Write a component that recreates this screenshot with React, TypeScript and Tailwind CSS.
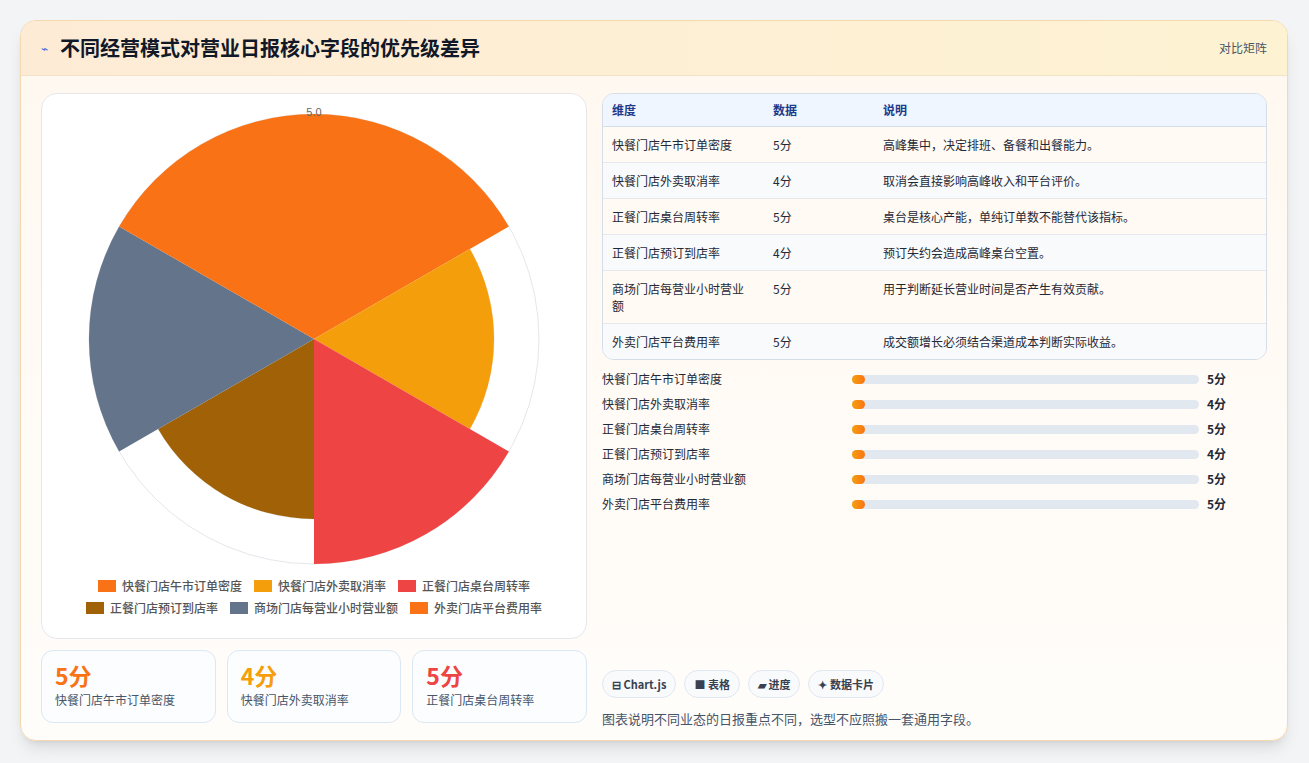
import React from 'react';

const rows = [
  { name: '快餐门店午市订单密度', score: 5, note: '高峰集中，决定排班、备餐和出餐能力。', color: '#f97316' },
  { name: '快餐门店外卖取消率', score: 4, note: '取消会直接影响高峰收入和平台评价。', color: '#f59e0b' },
  { name: '正餐门店桌台周转率', score: 5, note: '桌台是核心产能，单纯订单数不能替代该指标。', color: '#ef4444' },
  { name: '正餐门店预订到店率', score: 4, note: '预订失约会造成高峰桌台空置。', color: '#a16207' },
  { name: '商场门店每营业小时营业额', score: 5, note: '用于判断延长营业时间是否产生有效贡献。', color: '#64748b' },
  { name: '外卖门店平台费用率', score: 5, note: '成交额增长必须结合渠道成本判断实际收益。', color: '#f97316' },
];

function PolarChart() {
  const cx = 272, cy = 237, R = 225;
  const arc = (r: number, a0: number, a1: number) => {
    const t = (d: number) => (d * Math.PI) / 180;
    const x0 = cx + r * Math.cos(t(a0)), y0 = cy + r * Math.sin(t(a0));
    const x1 = cx + r * Math.cos(t(a1)), y1 = cy + r * Math.sin(t(a1));
    return `M${cx} ${cy} L${x0} ${y0} A${r} ${r} 0 0 1 ${x1} ${y1} Z`;
  };
  return (
    <svg width="546" height="474" className="block">
      {[1, 2, 3, 4, 5].map(i => (
        <circle key={i} cx={cx} cy={cy} r={(R * i) / 5} fill="none" stroke="#e5e7eb" strokeWidth="1" />
      ))}
      {rows.map((r, i) => (
        <path key={i} d={arc((R * r.score) / 5, -90 + i * 60, -30 + i * 60)} fill={r.color} />
      ))}
      <text x={cx} y={cy - R + 2} textAnchor="middle" fontSize="11" fill="#666" fontFamily="Liberation Sans, sans-serif">5.0</text>
    </svg>
  );
}

export default function App() {
  const font = { fontFamily: '"Noto Sans CJK SC", "Noto Sans", sans-serif' };
  return (
    <div className="w-[1309px] h-[763px] bg-[#f3f4f6] pt-5 px-5" style={font}>
      <div className="w-[1268px] h-[721px] rounded-2xl border border-[#f5d9ae] bg-gradient-to-b from-[#fff8f0] to-[#fffdfa] overflow-hidden shadow-lg">
        <div className="h-[55px] flex items-center justify-between px-5 bg-gradient-to-r from-[#fdebd6] to-[#fdf3d2] border-b border-[#f3e3c6]">
          <div className="flex items-center gap-3">
            <span className="text-[#3b6fd8] text-xs">⌁</span>
            <h1 className="text-[20px] font-bold text-[#111827]">不同经营模式对营业日报核心字段的优先级差异</h1>
          </div>
          <span className="text-xs text-[#4b5563]">对比矩阵</span>
        </div>
        <div className="flex gap-[15px] px-5 pt-[17px]">
          <div className="w-[546px] flex flex-col gap-[11px]">
            <div className="h-[546px] rounded-2xl border border-[#e5e7eb] bg-white pt-[8px]">
              <PolarChart />
              <div className="flex flex-wrap justify-center gap-x-3 gap-y-[6px] px-10 text-xs font-medium text-[#555] mt-[2px]">
                {rows.map((r, i) => (
                  <div key={i} className="flex items-center gap-[6px]">
                    <span className="w-[18px] h-[12px]" style={{ background: r.color }} />
                    {r.name}
                  </div>
                ))}
              </div>
            </div>
            <div className="flex gap-[11px]">
              {rows.slice(0, 3).map((r, i) => (
                <div key={i} className="w-[175px] h-[73px] rounded-xl border border-[#dbe7f3] bg-[#fbfdff] px-[13px] pt-[10px]">
                  <div className="text-[23px] font-bold leading-7" style={{ color: r.color }}>{r.score}分</div>
                  <div className="text-xs text-[#475569] mt-[3px]">{r.name}</div>
                </div>
              ))}
            </div>
          </div>
          <div className="flex-1 flex flex-col">
            <div className="rounded-xl border border-[#d4dde8] overflow-hidden text-xs text-[#1f2937]">
              <div className="flex h-[33px] items-center bg-[#eff6ff] border-b border-[#d4dde8] font-bold text-[#1e3a8a]">
                <div className="w-[160px] pl-[9px]">维度</div>
                <div className="w-[120px] pl-[10px]">数据</div>
                <div className="flex-1">说明</div>
              </div>
              {rows.map((r, i) => (
                <div key={i} className={`flex py-[9px] ${i < 5 ? 'border-b border-[#e5e9ef]' : ''} ${i % 2 === 0 ? 'bg-[#fffaf3]' : 'bg-[#f8fafc]'}`}>
                  <div className="w-[160px] pl-[9px] pr-2 leading-[17px]">{r.name}</div>
                  <div className="w-[120px] pl-[10px] leading-[17px]">{r.score}分</div>
                  <div className="flex-1 leading-[17px]">{r.note}</div>
                </div>
              ))}
            </div>
            <div className="flex flex-col gap-[7px] mt-[10px]">
              {rows.map((r, i) => (
                <div key={i} className="flex items-center h-[18px] text-xs text-[#1f2937]">
                  <div className="w-[250px]">{r.name}</div>
                  <div className="w-[347px] h-[9px] rounded-full bg-[#e2e8f0]">
                    <div className="w-[13px] h-[9px] rounded-full bg-gradient-to-r from-[#f59e0b] to-[#f97316]" />
                  </div>
                  <div className="ml-[8px] font-bold">{r.score}分</div>
                </div>
              ))}
            </div>
            <div className="flex gap-[8px] mt-[157px] text-[11px] font-bold text-[#374151]">
              {['⊟ Chart.js', '■ 表格', '▰ 进度', '✦ 数据卡片'].map(t => (
                <span key={t} className="h-[28px] px-[9px] flex items-center rounded-full border border-[#e2e8f0] bg-[#f8fafc]">{t}</span>
              ))}
            </div>
            <p className="text-[13px] text-[#475569] mt-[11px]">图表说明不同业态的日报重点不同，选型不应照搬一套通用字段。</p>
          </div>
        </div>
      </div>
    </div>
  );
}
